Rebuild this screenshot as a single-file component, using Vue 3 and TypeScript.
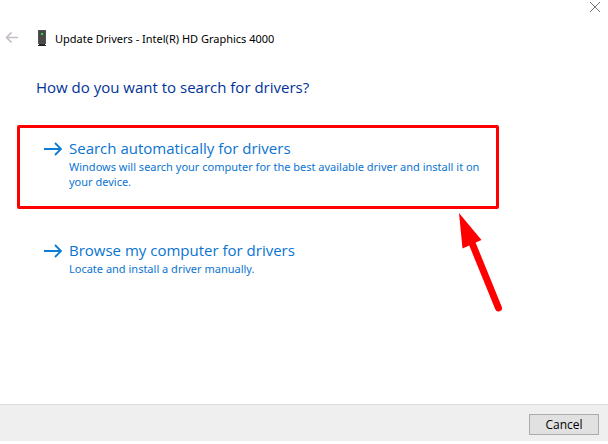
<script setup lang="ts">
interface DriverOption {
  id: string
  title: string
  detail: string
  highlighted: boolean
}

const deviceName = 'Intel(R) HD Graphics 4000'

const options: DriverOption[] = [
  {
    id: 'auto',
    title: 'Search automatically for drivers',
    detail:
      'Windows will search your computer for the best available driver and install it on your device.',
    highlighted: true,
  },
  {
    id: 'browse',
    title: 'Browse my computer for drivers',
    detail: 'Locate and install a driver manually.',
    highlighted: false,
  },
]
</script>

<template>
  <div class="dialog">
    <div class="caption">
      <button class="icon-button" type="button" aria-label="Close">
        <svg width="10" height="10" viewBox="0 0 10 10">
          <path d="M0 0L10 10M10 0L0 10" stroke="#777" stroke-width="1" />
        </svg>
      </button>
    </div>

    <header class="header">
      <button class="icon-button" type="button" aria-label="Back" disabled>
        <svg width="14" height="12" viewBox="0 0 14 12" fill="none">
          <path d="M1.500 5.500H13M6.500 0.500L1.500 5.500L6.500 10.500" stroke="#c5bdc8" stroke-width="1.700" />
        </svg>
      </button>
      <svg class="device" width="8" height="16" viewBox="0 0 8 16">
        <rect x="0.5" y="0.5" width="7" height="13" fill="#484846" stroke="#55504d" />
        <rect x="3" y="3" width="2" height="2" fill="#24e438" />
        <path d="M1 14H7V15H8V16H0V15H1Z" fill="#252322" />
      </svg>
      <span class="title">Update Drivers - {{ deviceName }}</span>
    </header>

    <main class="content">
      <h1 class="question">How do you want to search for drivers?</h1>

      <div class="options">
        <button
          v-for="option in options"
          :key="option.id"
          type="button"
          class="option"
          :class="{ highlighted: option.highlighted }"
        >
          <svg class="arrow" width="18" height="14" viewBox="0 0 18 14" fill="none">
            <path d="M0 7H17M11 1L17 7L11 13" stroke="#0a7bd6" stroke-width="1.8" />
          </svg>
          <span class="option-text">
            <span class="option-title">{{ option.title }}</span>
            <span class="option-detail">{{ option.detail }}</span>
          </span>
        </button>
        <svg class="pointer" width="46" height="102" viewBox="0 0 46 102">
          <path d="M0 1L22.500 28L3.500 36.500Z" fill="#f00" />
          <path d="M13 31L39.500 96" stroke="#f00" stroke-width="7" stroke-linecap="round" />
        </svg>
      </div>
    </main>

    <footer class="footer">
      <button class="cancel" type="button">Cancel</button>
    </footer>
  </div>
</template>

<style>
body {
  margin: 0;
  background: #fff;
}
</style>

<style scoped>
.dialog {
  box-sizing: border-box;
  display: flex;
  flex-direction: column;
  min-height: 100vh;
  padding-bottom: 3px;
  background: #fff;
  color: #000;
  font-family: 'Open Sans', 'Noto Sans', sans-serif;
  font-size: 12px;
  line-height: 15px;
}

button {
  font: inherit;
  cursor: pointer;
}

.icon-button {
  display: flex;
  padding: 0;
  border: 0;
  background: none;
}

.caption {
  display: flex;
  justify-content: flex-end;
  padding: 2px 8px 16px 0;
}

.header {
  display: flex;
  align-items: center;
  height: 20px;
  padding-left: 5px;
}

.device {
  margin: 0 9px 0 19px;
}

.title,
.option-detail {
  font-family: 'Noto Sans', 'Open Sans', sans-serif;
  font-size: 11px;
  line-height: 15px;
}

.content {
  flex: 1;
}

.question {
  margin: 0;
  padding: 29px 36px 0;
  color: #003399;
  font-size: 15px;
  font-weight: 400;
  line-height: 20px;
}

.options {
  position: relative;
  display: flex;
  flex-direction: column;
  gap: 18px;
  width: 482px;
  max-width: calc(100% - 34px);
  margin: 28px 17px 0;
}

.option {
  box-sizing: border-box;
  display: flex;
  align-items: flex-start;
  gap: 7px;
  min-height: 84px;
  padding: 10px 5px 10px 24px;
  border: 3px solid transparent;
  border-radius: 2px;
  background: none;
  color: #0a74d1;
  text-align: left;
}

.option.highlighted {
  border-color: #f00;
}

.arrow {
  flex: none;
  margin-top: 4px;
}

.option-text {
  display: flex;
  flex-direction: column;
}

.option-title {
  font-size: 15px;
  line-height: 21px;
}

.pointer {
  position: absolute;
  top: 87px;
  right: -6px;
}

.footer {
  display: flex;
  justify-content: flex-end;
  padding: 9px 9px 6px;
  border-top: 1px solid #dcdcdc;
  background: #efefef;
}

.cancel {
  width: 70px;
  height: 21px;
  padding: 0;
  border: 1px solid #acacac;
  background: #e1e1e1;
  color: #000;
}
</style>
